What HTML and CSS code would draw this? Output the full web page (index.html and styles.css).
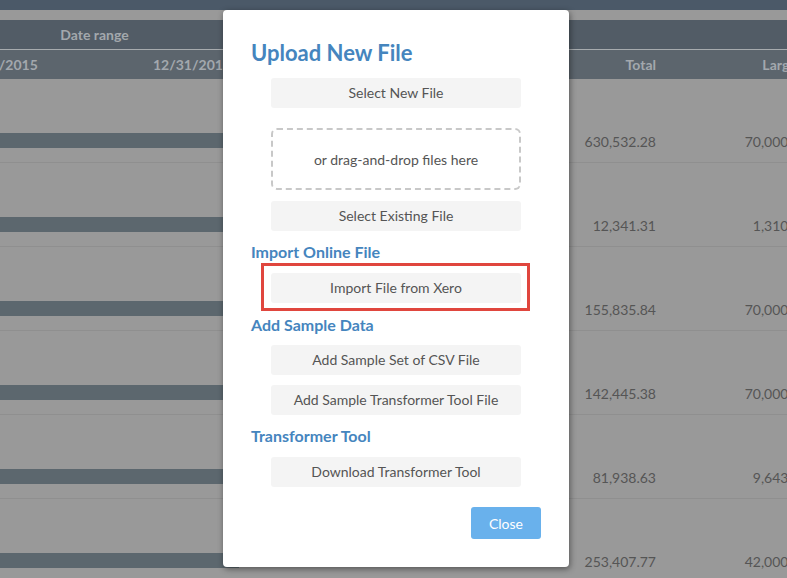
FILE: index.html
```html
<!DOCTYPE html>
<html>
<head>
<meta charset="utf-8">
<link rel="stylesheet" href="styles.css">
</head>
<body>
<div class="page">
  <div class="topbar"></div>
  <div class="gap"></div>
  <div class="table">
    <div class="hrow hrow1">
      <div class="c-date">Date range</div>
    </div>
    <div class="hrow hrow2">
      <div class="c-start">1/1/2015</div>
      <div class="c-end">12/31/2015</div>
      <div class="c-mid"></div>
      <div class="c-total">Total</div>
      <div class="c-large">Largest</div>
    </div>
    <div class="row"><div class="bar"></div><div class="c-mid"></div><div class="c-total">630,532.28</div><div class="c-large">70,000.00</div></div>
    <div class="row"><div class="bar"></div><div class="c-mid"></div><div class="c-total">12,341.31</div><div class="c-large">1,310.00</div></div>
    <div class="row"><div class="bar"></div><div class="c-mid"></div><div class="c-total">155,835.84</div><div class="c-large">70,000.00</div></div>
    <div class="row"><div class="bar"></div><div class="c-mid"></div><div class="c-total">142,445.38</div><div class="c-large">70,000.00</div></div>
    <div class="row"><div class="bar"></div><div class="c-mid"></div><div class="c-total">81,938.63</div><div class="c-large">9,643.00</div></div>
    <div class="row"><div class="bar"></div><div class="c-mid"></div><div class="c-total">253,407.77</div><div class="c-large">42,000.00</div></div>
  </div>

  <div class="modal">
    <h1 class="title">Upload New File</h1>
    <div class="btn first">Select New File</div>
    <div class="dropzone">or drag-and-drop files here</div>
    <div class="btn mt11">Select Existing File</div>
    <h2 class="heading h-import">Import Online File</h2>
    <div class="highlight"><div class="btn inner">Import File from Xero</div></div>
    <h2 class="heading h-sample">Add Sample Data</h2>
    <div class="btn mt10">Add Sample Set of CSV File</div>
    <div class="btn mt10">Add Sample Transformer Tool File</div>
    <h2 class="heading h-tool">Transformer Tool</h2>
    <div class="btn mt11">Download Transformer Tool</div>
    <div class="footer"><div class="close">Close</div></div>
  </div>
</div>
</body>
</html>
```
FILE: styles.css
```css
html, body {
  margin: 0;
  padding: 0;
}
body {
  font-family: Lato, "Open Sans", sans-serif;
  background: #999999;
  width: 787px;
  height: 578px;
  overflow: hidden;
}
.page {
  position: relative;
  width: 787px;
  height: 578px;
  overflow: hidden;
}
.topbar {
  height: 10px;
  background: #4b5968;
}
.gap {
  height: 10px;
  background: #999999;
}
.table {
  margin-left: -30px;
  width: 900px;
}
.hrow {
  display: flex;
  height: 29px;
  align-items: center;
  font-size: 14px;
  font-weight: 700;
  color: #a3a8ad;
}
.hrow1 {
  background: #525c66;
  border-bottom: 1px solid #a7abae;
}
.hrow2 {
  background: #5c656d;
}
.c-date {
  width: 269px;
  text-align: center;
  padding-right: 20px;
  box-sizing: border-box;
}
.c-start {
  width: 120px;
  padding-left: 6px;
  box-sizing: border-box;
}
.c-end {
  width: 149px;
  padding-right: 8px;
  text-align: right;
  box-sizing: border-box;
}
.c-mid {
  width: 327px;
}
.c-total {
  width: 100px;
  padding-right: 10px;
  text-align: right;
  box-sizing: border-box;
}
.c-large {
  width: 150px;
  padding-right: 8px;
  text-align: right;
  box-sizing: border-box;
}
.row {
  display: flex;
  align-items: center;
  height: 30px;
  padding-top: 45px;
  padding-bottom: 8px;
  border-bottom: 1px solid #8f8f8f;
  font-size: 14px;
  color: #555555;
}
.row .bar {
  width: 269px;
  height: 15px;
  background: #5c676e;
  margin-top: 2px;
}
.row .c-total, .row .c-large {
  line-height: 30px;
  padding-top: 6px;
}

.modal {
  position: absolute;
  left: 223px;
  top: 10px;
  width: 346px;
  height: 557px;
  box-sizing: border-box;
  background: #ffffff;
  border-radius: 4px;
  box-shadow: 1px 2px 6px rgba(0, 0, 0, 0.45);
  padding: 30px 28px 0 28px;
  display: flex;
  flex-direction: column;
  align-items: flex-start;
}
.title {
  margin: 0;
  font-size: 22px;
  line-height: 26px;
  font-weight: 700;
  color: #4585be;
}
.btn {
  box-sizing: border-box;
  width: 250px;
  height: 30px;
  padding-bottom: 2px;
  margin-left: 20px;
  background: #f4f4f4;
  border-radius: 3px;
  color: #555555;
  font-size: 14px;
  display: flex;
  align-items: center;
  justify-content: center;
  flex-shrink: 0;
}
.btn.first {
  margin-top: 12px;
}
.mt10 {
  margin-top: 10px;
}
.mt11 {
  margin-top: 11px;
}
.dropzone {
  margin-top: 20px;
  margin-left: 20px;
  width: 250px;
  height: 62px;
  box-sizing: border-box;
  border: 2px dashed #c8c8c8;
  border-radius: 6px;
  color: #555555;
  font-size: 14px;
  display: flex;
  align-items: center;
  justify-content: center;
}
.heading {
  margin: 0;
  font-size: 16px;
  line-height: 20px;
  font-weight: 700;
  color: #4585be;
}
.h-import {
  margin-top: 11px;
}
.h-sample {
  margin-top: 4px;
}
.h-tool {
  margin-top: 11px;
}
.highlight {
  margin-top: 1px;
  margin-left: 10px;
  border: 3px solid #e0463e;
  padding: 7px 6px 5px 7px;
}
.btn.inner {
  margin-left: 0;
}
.footer {
  margin-top: 20px;
  width: 100%;
  display: flex;
  justify-content: flex-end;
}
.close {
  width: 70px;
  height: 32px;
  background: #69b1ec;
  border-radius: 3px;
  color: #ffffff;
  font-size: 14px;
  display: flex;
  align-items: center;
  justify-content: center;
}
```
